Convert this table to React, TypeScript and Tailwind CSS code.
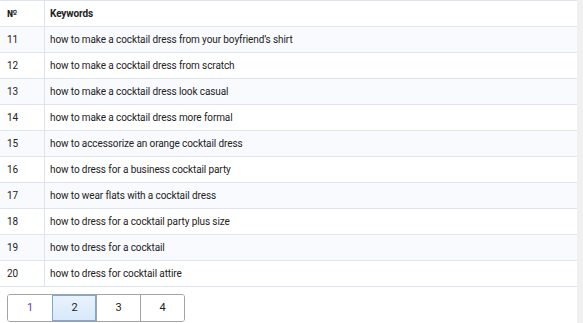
const keywords = [
  'how to make a cocktail dress from your boyfriend\u2019s shirt',
  'how to make a cocktail dress from scratch',
  'how to make a cocktail dress look casual',
  'how to make a cocktail dress more formal',
  'how to accessorize an orange cocktail dress',
  'how to dress for a business cocktail party',
  'how to wear flats with a cocktail dress',
  'how to dress for a cocktail party plus size',
  'how to dress for a cocktail',
  'how to dress for cocktail attire',
];

const pages = [1, 2, 3, 4];

export default function App() {
  return (
    <div className="flex w-[583px] h-[323px] bg-white text-[#222] font-['Roboto',sans-serif]">
      <div className="w-[577px]">
        <div className="text-[10px] tracking-[-0.1px]">
          <div className="flex h-[27px] border-y border-[#dde3ef] font-bold">
            <div className="w-[45px] border-r border-[#dde3ef] pl-[7px] flex items-center">№</div>
            <div className="flex-1 pl-[5px] flex items-center">Keywords</div>
          </div>
          {keywords.map((k, i) => (
            <div
              key={k}
              className={`flex h-[26px] border-b border-[#dde3ef] ${i % 2 === 0 ? 'bg-[#f8fafe]' : 'bg-white'}`}
            >
              <div className="w-[45px] border-r border-[#dde3ef] pl-[7px] flex items-center">{11 + i}</div>
              <div className="flex-1 pl-[5px] flex items-center">{k}</div>
            </div>
          ))}
        </div>
        <div className="flex mt-[7px] ml-[7px] w-fit rounded-[3px] border border-[#a3a3a3] overflow-hidden text-[11px]">
          {pages.map((p, i) => (
            <div
              key={p}
              className={`w-[44px] h-[26px] flex items-center justify-center ${i > 0 ? 'border-l border-[#a3a3a3]' : ''} ${
                p === 2
                  ? 'bg-gradient-to-b from-[#e9f3fd] to-[#d6e9fb] outline outline-1 outline-[#7ea7d8] -outline-offset-1'
                  : 'bg-white'
              } ${p === 1 ? 'text-[#6b3fa0]' : 'text-[#222]'}`}
            >
              {p}
            </div>
          ))}
        </div>
      </div>
      <div className="w-[6px] h-full bg-[#f0f0f0]" />
    </div>
  );
}
